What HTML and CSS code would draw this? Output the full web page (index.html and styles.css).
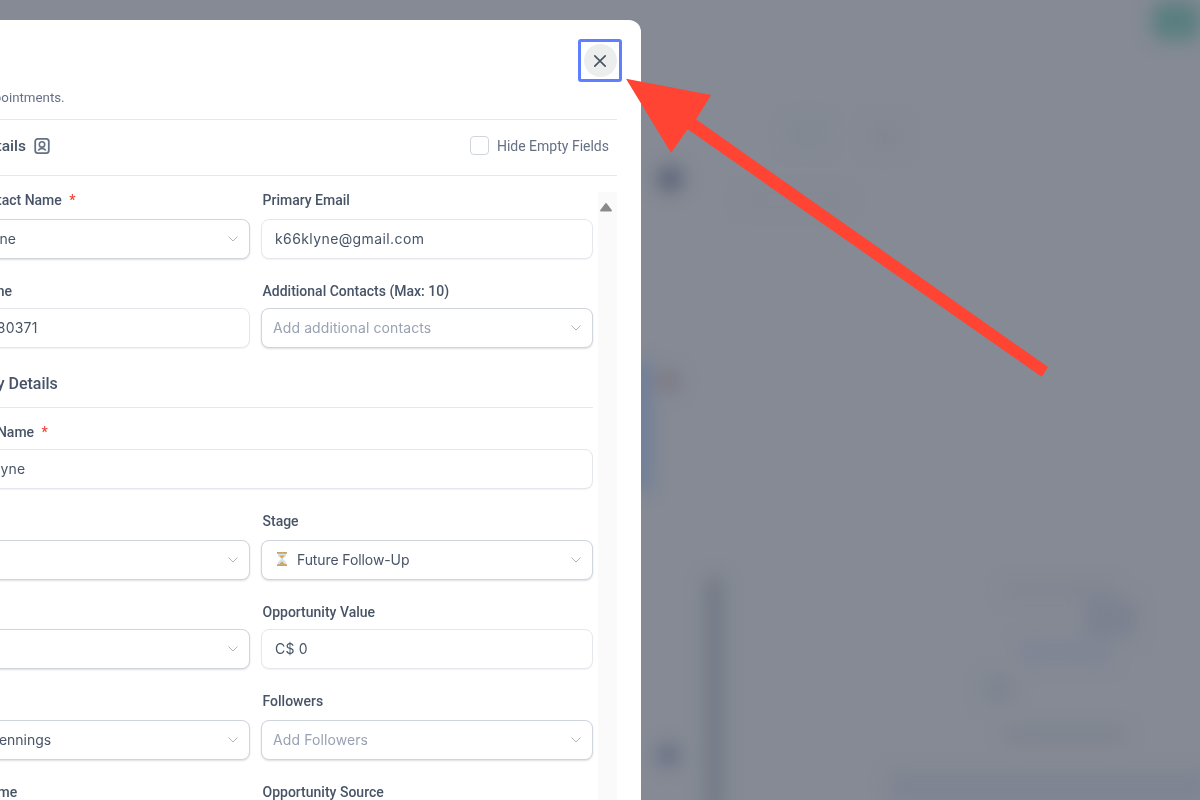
FILE: index.html
```html
<!DOCTYPE html>
<html lang="en">
<head>
<meta charset="utf-8">
<title>Edit Opportunity</title>
<link rel="stylesheet" href="styles.css">
</head>
<body>
<div class="backdrop">
  <div class="blob blob-green"></div>
  <div class="blob blob-avatar"></div>
  <div class="blob blob-brown"></div>
  <div class="blob blob-blue"></div>
  <div class="blob blob-bar"></div>
  <div class="blob blob-dot"></div>
  <div class="blob blob-t1"></div>
  <div class="blob blob-t2"></div>
  <div class="blob blob-t3"></div>
  <div class="blob blob-r1"></div>
  <div class="blob blob-r2"></div>
  <div class="blob blob-r3"></div>
  <div class="blob blob-r4"></div>
  <div class="blob blob-r5"></div>
  <div class="blob blob-r6"></div>
</div>

<main class="modal">
  <header class="modal-head">
    <div class="modal-titles">
      <h1 class="modal-title">Edit</h1>
      <p class="modal-sub">Book new appointments.</p>
    </div>
    <div class="close-focus">
      <button class="close-btn" aria-label="Close">
        <svg width="14" height="14" viewBox="0 0 14 14" fill="none"><path d="M1.800 1.800 12.200 12.200M12.200 1.800 1.800 12.200" stroke="#4b5563" stroke-width="1.700" stroke-linecap="round"/></svg>
      </button>
    </div>
  </header>

  <div class="toolbar">
    <div class="toolbar-title">
      <span>Contact Details</span>
      <svg width="18" height="18" viewBox="0 0 18 18" fill="none"><rect x="2.200" y="1.900" width="13.600" height="14.200" rx="2.600" stroke="#667085" stroke-width="1.800"/><circle cx="9" cy="7.400" r="2.700" stroke="#667085" stroke-width="1.600"/><path d="M5.200 13.400c1-1.300 2.300-1.900 3.800-1.900s2.800.6 3.800 1.900" stroke="#667085" stroke-width="1.600"/></svg>
    </div>
    <label class="hide-empty"><span class="checkbox"></span><span>Hide Empty Fields</span></label>
  </div>

  <div class="body">
    <form class="form">
      <div class="grid">
        <div class="field tall">
          <div class="label">Primary Contact Name <span class="req">*</span></div>
          <div class="control select"><span class="value">Kaitlyn Klyne</span><svg class="chev" width="10" height="6" viewBox="0 0 10 6" fill="none"><path d="M.5.5 5 5 9.500.5" stroke="#b0b7c3"/></svg></div>
        </div>
        <div class="field tall">
          <div class="label">Primary Email</div>
          <div class="control input"><span class="value email">k66klyne@gmail.com</span></div>
        </div>
        <div class="field">
          <div class="label">Primary Phone</div>
          <div class="control input"><span class="value">+1 416 5580371</span></div>
        </div>
        <div class="field">
          <div class="label">Additional Contacts (Max: 10)</div>
          <div class="control select"><span class="placeholder">Add additional contacts</span><svg class="chev" width="10" height="6" viewBox="0 0 10 6" fill="none"><path d="M.5.5 5 5 9.500.5" stroke="#b0b7c3"/></svg></div>
        </div>
      </div>

      <h2 class="section">Opportunity Details</h2>

      <div class="grid">
        <div class="field wide">
          <div class="label">Opportunity Name <span class="req">*</span></div>
          <div class="control input"><span class="value">Katlynn Klyne</span></div>
        </div>
        <div class="field tall">
          <div class="label">Pipeline</div>
          <div class="control select"><span class="value">Sales</span><svg class="chev" width="10" height="6" viewBox="0 0 10 6" fill="none"><path d="M.5.5 5 5 9.500.5" stroke="#b0b7c3"/></svg></div>
        </div>
        <div class="field tall">
          <div class="label">Stage</div>
          <div class="control select stage">
            <svg class="glass" width="14" height="16" viewBox="0 0 14 16"><path d="M3 2.500h8v2.200L7.900 8l3.100 3.300v2.200H3v-2.200L6.100 8 3 4.700z" fill="#cfe3f2"/><path d="M4.200 4.600h5.600L7 7.600zM3.800 13.400 7 10.600l3.200 2.800z" fill="#e9a13c"/><rect x="2" y="1" width="10" height="1.800" fill="#c9a26a"/><rect x="2" y="13.200" width="10" height="1.800" fill="#c9a26a"/></svg>
            <span class="value stage-text">Future Follow-Up</span><svg class="chev" width="10" height="6" viewBox="0 0 10 6" fill="none"><path d="M.5.5 5 5 9.500.5" stroke="#b0b7c3"/></svg>
          </div>
        </div>
        <div class="field">
          <div class="label">Status</div>
          <div class="control select"><span class="value">Open</span><svg class="chev" width="10" height="6" viewBox="0 0 10 6" fill="none"><path d="M.5.5 5 5 9.500.5" stroke="#b0b7c3"/></svg></div>
        </div>
        <div class="field">
          <div class="label">Opportunity Value</div>
          <div class="control input"><span class="value">C$ 0</span></div>
        </div>
        <div class="field tall">
          <div class="label">Owner</div>
          <div class="control select"><span class="value">Matthew Jennings</span><svg class="chev" width="10" height="6" viewBox="0 0 10 6" fill="none"><path d="M.5.5 5 5 9.500.5" stroke="#b0b7c3"/></svg></div>
        </div>
        <div class="field tall">
          <div class="label">Followers</div>
          <div class="control select"><span class="placeholder">Add Followers</span><svg class="chev" width="10" height="6" viewBox="0 0 10 6" fill="none"><path d="M.5.5 5 5 9.500.5" stroke="#b0b7c3"/></svg></div>
        </div>
        <div class="field">
          <div class="label">Follow-Up Time</div>
        </div>
        <div class="field">
          <div class="label">Opportunity Source</div>
        </div>
      </div>
    </form>
    <div class="scrolltrack">
      <svg width="14" height="10" viewBox="0 0 14 10"><path d="M7 2 12 8.500H2z" fill="#8a8a8a" stroke="#8a8a8a" stroke-width="1.800" stroke-linejoin="round"/></svg>
    </div>
  </div>
</main>

<svg class="arrow" width="1200" height="800" viewBox="0 0 1200 800"><polygon points="626,78.7 711,95 696,119.3 1048,367 1041.7,376.7 687.7,129.3 671,152.7" fill="#ff4433"/></svg>
</body>
</html>
```

FILE: styles.css
```css
* { box-sizing: border-box; }
html, body {
  margin: 0;
  height: 800px;
  overflow: hidden;
  background: #858a94;
  font-family: Roboto, "Liberation Sans", sans-serif;
}
.backdrop { position: absolute; inset: 0; filter: blur(9px); }
.blob { position: absolute; }
.blob-green { left: 1152px; top: 2px; width: 48px; height: 38px; background: #5a7f80; border-radius: 12px; }
.blob-avatar { left: 657px; top: 166px; width: 26px; height: 26px; border-radius: 50%; background: #5e6579; }
.blob-brown { left: 657px; top: 370px; width: 22px; height: 22px; border-radius: 50%; background: #7b7880; }
.blob-blue { left: 636px; top: 362px; width: 12px; height: 128px; background: #64789c; }
.blob-bar { left: 706px; top: 578px; width: 16px; height: 240px; background: #727885; }
.blob-dot { left: 657px; top: 744px; width: 22px; height: 22px; border-radius: 50%; background: #666d84; }
.blob-t1 { left: 790px; top: 122px; width: 34px; height: 24px; background: #818890; }
.blob-t2 { left: 870px; top: 125px; width: 30px; height: 24px; background: #82868f; }
.blob-t3 { left: 745px; top: 195px; width: 100px; height: 10px; background: #828792; }
.blob-r1 { left: 1005px; top: 584px; width: 110px; height: 12px; background: #7f8491; }
.blob-r2 { left: 1085px; top: 600px; width: 50px; height: 36px; background: #7c8190; }
.blob-r3 { left: 1020px; top: 640px; width: 90px; height: 24px; background: #808595; }
.blob-r4 { left: 985px; top: 677px; width: 28px; height: 24px; background: #7e8491; }
.blob-r5 { left: 1005px; top: 730px; width: 120px; height: 10px; background: #7a808e; }
.blob-r6 { left: 890px; top: 772px; width: 320px; height: 30px; background: #7e8492; }

.modal {
  position: absolute;
  left: -120px;
  top: 20px;
  width: 761px;
  height: 1000px;
  padding: 0 24px 0 38px;
  background: #fff;
  border-radius: 12px;
  overflow: hidden;
}
.modal-head {
  display: flex;
  justify-content: space-between;
  align-items: flex-start;
  height: 100px;
  border-bottom: 1px solid #e4e7ec;
}
.modal-titles { padding-top: 20px; }
.modal-title { margin: 0; font-size: 18px; line-height: 28px; font-weight: 500; color: #101828; }
.modal-sub { margin: 21px 0 0; font-size: 13.300px; line-height: 18px; color: #667085; }
.close-focus {
  width: 44px;
  height: 43px;
  margin: 19px -5px 0 0;
  border: 3px solid #5f7fff;
  border-radius: 3px;
  display: flex;
  align-items: center;
  justify-content: center;
}
.close-btn {
  width: 33px;
  height: 33px;
  flex: none;
  padding: 0;
  border: 0;
  border-radius: 50%;
  background: #eceded;
  display: flex;
  align-items: center;
  justify-content: center;
}
.toolbar {
  height: 56px;
  display: flex;
  justify-content: space-between;
  align-items: center;
  padding: 0 8px 4px 2px;
  border-bottom: 1px solid #e4e7ec;
}
.toolbar-title {
  display: flex;
  align-items: center;
  gap: 7px;
  font-size: 15.500px;
  font-weight: 500;
  color: #475467;
}
.hide-empty {
  display: flex;
  align-items: center;
  gap: 8px;
  font-size: 14px;
  color: #667085;
}
.checkbox {
  width: 19px;
  height: 19px;
  border: 1px solid #d0d5dd;
  border-radius: 4px;
  background: #fff;
}
.body { display: flex; gap: 5px; }
.form { width: 675px; padding-top: 14px; }
.grid { display: grid; grid-template-columns: 1fr 1fr; column-gap: 11px; row-gap: 22px; }
.wide { grid-column: 1 / -1; }
.label {
  height: 20px;
  margin-bottom: 7px;
  padding-left: 1.500px;
  font-size: 14px;
  line-height: 20px;
  font-weight: 500;
  color: #475467;
}
.tall .label { margin-bottom: 9px; }
.req { margin-left: 4px; color: #f04438; }
.control {
  height: 40px;
  display: flex;
  align-items: center;
  padding-bottom: 2px;
  border-radius: 8px;
  background: #fff;
  font-family: Inter, Roboto, sans-serif;
  font-size: 14px;
}
.input { padding-left: 13px; padding-right: 13px; border: 1px solid #e4e7ec; box-shadow: 0 1px 1px rgba(16, 24, 40, .05); letter-spacing: .2px; }
.select { padding-left: 11px; padding-right: 11px; border: 1px solid #d0d5dd; box-shadow: 0 1px 2px rgba(16, 24, 40, .14); justify-content: space-between; }
.value { color: #475467; }
.email { letter-spacing: .4px; }
.placeholder { color: #98a2b3; letter-spacing: .1px; }
.chev { flex: none; margin-top: 2px; }
.stage { justify-content: flex-start; padding-left: 13px; }
.glass { flex: none; margin-right: 8px; }
.stage-text { flex: 1; letter-spacing: -.1px; }
.section {
  margin: 25px 0 14px;
  padding: 0 0 12px 2px;
  height: 35px;
  border-bottom: 1px solid #e4e7ec;
  font-size: 16px;
  line-height: 22px;
  font-weight: 500;
  color: #475467;
}
.scrolltrack {
  width: 19px;
  height: 700px;
  margin-top: 16px;
  padding: 10px 3px 0 0;
  background: #fafafa;
  display: flex;
  justify-content: center;
  align-items: flex-start;
}
.arrow { position: absolute; left: 0; top: 0; }
```
